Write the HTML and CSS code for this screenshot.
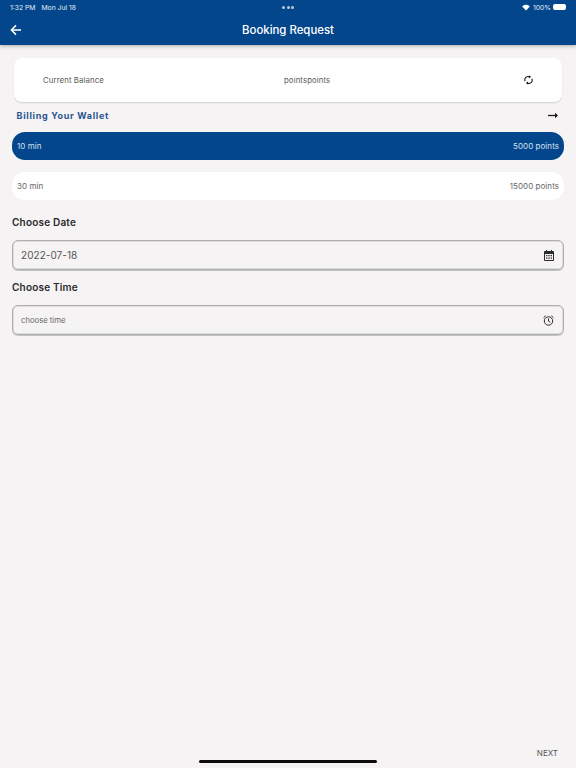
FILE: index.html
```html
<!DOCTYPE html>
<html lang="en">
<head>
<meta charset="utf-8">
<title>Booking Request</title>
<link rel="stylesheet" href="styles.css">
</head>
<body>
<div class="page">
  <header class="appbar">
    <div class="status">
      <div class="status-left"><span>1:32 PM</span><span>Mon Jul 18</span></div>
      <div class="dots"><i></i><i></i><i></i></div>
      <div class="status-right">
        <svg class="wifi" width="8" height="7" viewBox="0 0 10 8"><path d="M5 7.6 0.2 2.6C2.9 0 7.1 0 9.8 2.6Z" fill="#fff"/></svg>
        <span>100%</span>
        <span class="battery"></span>
      </div>
    </div>
    <div class="toolbar">
      <svg class="back" width="12" height="12" viewBox="0 0 12 12"><path d="M11 6H1.6M6 1.4 1.4 6 6 10.6" fill="none" stroke="#fff" stroke-width="1.5"/></svg>
      <h1>Booking Request</h1>
    </div>
  </header>
  <main class="content">
    <section class="balance">
      <span class="balance-label">Current Balance</span>
      <span class="balance-value">pointspoints</span>
      <svg class="refresh" width="9" height="10" viewBox="0 0 10 12"><path d="M1 7.6A4 4 0 0 1 6.600 2.400M9 4.400A4 4 0 0 1 3.400 9.600" fill="none" stroke="#1c1c1c" stroke-width="1.300"/><path d="M5.600 0.200 8.200 2.400 5.400 4ZM4.400 7.800 1.800 9.700 4.600 11.800Z" fill="#1c1c1c"/></svg>
    </section>
    <div class="wallet">
      <span class="wallet-title">Billing Your Wallet</span>
      <svg class="wallet-arrow" width="10" height="7" viewBox="0 0 10 7"><path d="M0 3.500H9" stroke="#1c1c1c" stroke-width="1.300"/><path d="M7 .8 10 3.500 7 6.200Z" fill="#1c1c1c"/></svg>
    </div>
    <div class="option selected"><span>10 min</span><span>5000 points</span></div>
    <div class="option"><span>30 min</span><span>15000 points</span></div>
    <h2 class="field-label date-label">Choose Date</h2>
    <div class="field">
      <span class="date-value">2022-07-18</span>
      <svg width="10" height="11" viewBox="0 0 10 11"><path fill-rule="evenodd" d="M2 0h1v1h4V0h1v1h1a1 1 0 0 1 1 1v8a1 1 0 0 1-1 1H1a1 1 0 0 1-1-1V2a1 1 0 0 1 1-1h1ZM1 4v6h8V4Z" fill="#2b2b2b"/><path d="M2 5h1.400v1.200H2ZM4.300 5h1.400v1.200H4.300ZM6.600 5H8v1.200H6.600ZM2 7.500h1.400v1.200H2ZM4.300 7.500h1.400v1.200H4.300ZM6.600 7.500H8v1.200H6.600Z" fill="#2b2b2b"/></svg>
    </div>
    <h2 class="field-label time-label">Choose Time</h2>
    <div class="field">
      <span class="time-value">choose time</span>
      <svg width="11" height="11" viewBox="0 0 11 11"><circle cx="5.500" cy="6" r="4.200" fill="none" stroke="#2b2b2b" stroke-width="1"/><path d="M5.500 3.500V6.200L7.300 7.300M.6 2.600 2.700.8M10.400 2.600 8.300.8" fill="none" stroke="#2b2b2b" stroke-width="1"/></svg>
    </div>
  </main>
  <footer class="footer"><span>NEXT</span></footer>
  <div class="home-bar"></div>
</div>
</body>
</html>
```
FILE: styles.css
```css
* { box-sizing: border-box; }
html, body { margin: 0; padding: 0; }
body { font-family: Inter, "Liberation Sans", sans-serif; background: #f5f3f4; color: #555; }
.page { position: relative; width: 576px; height: 768px; display: flex; flex-direction: column; overflow: hidden; }

.appbar { height: 45px; background: #03468c; color: #fff; box-shadow: 0 1px 4px rgba(0,0,0,.3); flex: none; }
.status { height: 14px; padding: 0 10px; display: flex; align-items: center; justify-content: space-between; font-size: 6.800px; position: relative; color: #e6edf5; }
.status-left { display: flex; gap: 6px; }
.dots { position: absolute; left: 282px; top: 6px; display: flex; gap: 1.500px; }
.dots i { width: 3px; height: 3px; border-radius: 50%; background: #b9cbe0; }
.status-right { display: flex; align-items: center; gap: 2px; }
.wifi { margin-right: 1px; }
.battery { width: 13px; height: 6px; border-radius: 2px; background: #fff; display: block; }
.toolbar { height: 31px; padding-left: 10px; display: flex; align-items: center; }
.toolbar h1 { margin: 0; width: 100%; text-align: center; font-size: 11.400px; font-weight: 500; padding-right: 22px; }
.back { flex: none; }

.content { padding: 13px 12px 0; flex: 1; }
.balance { margin: 0 2px; height: 44px; background: #fff; border-radius: 8px; box-shadow: 0 1px 1.500px rgba(0,0,0,.15); display: flex; align-items: center; font-size: 7.800px; color: #5a5a5a; padding: 0 29px 0 29px; }
.balance-label { width: 241px; letter-spacing: .1px; }
.balance-value { flex: 1; letter-spacing: .1px; }
.wallet { height: 13px; margin: 7px 6px 0 4.500px; display: flex; align-items: center; justify-content: space-between; }
.wallet-title { font-size: 9px; font-weight: 700; color: #2a558f; letter-spacing: .7px; }
.option { height: 28px; border-radius: 13px; background: #fff; display: flex; align-items: center; justify-content: space-between; padding: 0 5px; font-size: 8px; color: #666; letter-spacing: .05px; margin-bottom: 12px; }
.wallet + .option { margin-top: 10px; }
.option.selected { background: #03468c; color: #d5e2f0; }
.field-label { margin: 0; font-size: 10px; font-weight: 600; color: #2a2a2a; line-height: 12px; letter-spacing: .2px; }
.date-label { margin-top: 16px; }
.time-label { margin-top: 11px; }
.field { height: 30px; margin-top: 12px; border: 1px solid #aeaeae; border-radius: 6px; box-shadow: 0 1px 0 #c4c4c4, inset 0 0 0 .5px #c8c8c8; display: flex; align-items: center; justify-content: space-between; padding: 0 9.500px 0 8px; }
.date-value { font-size: 10px; color: #555; letter-spacing: .05px; }
.time-value { font-size: 7.700px; color: #666; }

.footer { flex: none; height: 31px; padding: 11px 18px 0 0; display: flex; justify-content: flex-end; font-size: 8px; color: #555; }
.home-bar { position: absolute; left: 199px; top: 760px; width: 178px; height: 3px; border-radius: 2px; background: #0c0c0c; }
```
